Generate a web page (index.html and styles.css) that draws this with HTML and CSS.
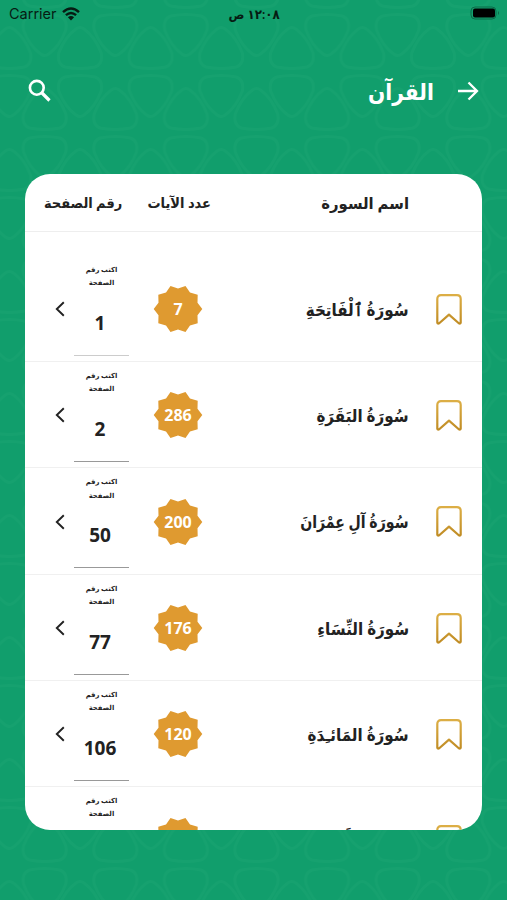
FILE: index.html
```
<!DOCTYPE html>
<html lang="ar" dir="rtl">
<head>
    <meta charset="UTF-8">
    <meta name="viewport" content="width=device-width, initial-scale=1.0">
    <title>القرآن</title>
    <link rel="stylesheet" href="styles.css">
</head>
<body>
    <!-- Background pattern and shared icons -->
    <svg class="pattern" width="507" height="900" aria-hidden="true">
        <defs>
            <pattern id="lattice" x="80" y="11" width="70.6" height="122" viewBox="0 0 70 122" preserveAspectRatio="none" patternUnits="userSpaceOnUse">
                <g fill="none" stroke="#35b582" stroke-width="3">
                    <path id="down" d="M20 5Q35 2 50 5Q58 8 56 19Q50 35 39 43Q35 46 31 43Q20 35 14 19Q12 8 20 5Z"/>
                    <path id="up" d="M-15 56Q0 59 15 56Q23 53 21 42Q15 26 4 18Q0 15 -4 18Q-15 26 -21 42Q-23 53 -15 56Z"/>
                    <use href="#up" x="70"/>
                    <use href="#down" x="-35" y="61"/>
                    <use href="#down" x="35" y="61"/>
                    <use href="#up" x="35" y="61"/>
                </g>
            </pattern>
            <linearGradient id="gold" x1="0" y1="0" x2="0" y2="1">
                <stop offset="0" stop-color="#dcae45"/>
                <stop offset="1" stop-color="#c08c24"/>
            </linearGradient>
            <symbol id="bookmark" viewBox="0 0 26 31">
                <path d="M5 1.2H21Q24.7 1.2 24.7 5V28.6Q24.4 30.2 22.8 29.3L13 20.6L3.2 29.3Q1.6 30.2 1.3 28.6V5Q1.3 1.2 5 1.2Z" fill="none" stroke="url(#gold)" stroke-width="2.2" stroke-linejoin="round"/>
            </symbol>
            <symbol id="star" viewBox="-25 -25 50 50">
                <path d="M24.3 0L19.5 6.3L19.7 14.3L12 16.6L7.5 23.1L0 20.5L-7.5 23.1L-12 16.6L-19.7 14.3L-19.5 6.3L-24.3 0L-19.5 -6.3L-19.7 -14.3L-12 -16.6L-7.5 -23.1L0 -20.5L7.5 -23.1L12 -16.6L19.7 -14.3L19.5 -6.3Z" fill="#df9a30"/>
            </symbol>
            <symbol id="chevron" viewBox="0 0 10 16">
                <path d="M8.8 1.2L1.8 8L8.8 14.8" fill="none" stroke="#222" stroke-width="1.9"/>
            </symbol>
        </defs>
        <rect width="507" height="900" fill="url(#lattice)"/>
    </svg>

    <div class="status-bar" dir="ltr">
        <div class="carrier">
            <span>Carrier</span>
            <svg width="18" height="14" viewBox="0 0 18 14">
                <path d="M1 5.2Q9 -2.2 17 5.2M3.9 8.2Q9 3.6 14.1 8.2" fill="none" stroke="#061c13" stroke-width="2.4"/>
                <path d="M5.9 10.2Q9 7.6 12.1 10.2L9 13.6Z" fill="#061c13"/>
            </svg>
        </div>
        <span class="time" dir="rtl">١٢:٠٨ ص</span>
        <svg class="battery" width="30" height="15" viewBox="0 0 30 15">
            <rect x="1" y="1" width="25" height="12" rx="4" fill="none" stroke="#0b6b49"/>
            <rect x="3" y="2.5" width="22" height="9" rx="2" fill="#000"/>
            <path d="M28 5Q30 7 28 9Z" fill="#0b6b49"/>
        </svg>
    </div>

    <header class="top-bar">
        <svg width="22" height="20" viewBox="0 0 22 20">
            <path d="M1 10H19M11.5 1.5L20 10L11.5 18.5" fill="none" stroke="#fff" stroke-width="2.3"/>
        </svg>
        <h1>القرآن</h1>
        <svg class="search" width="23" height="23" viewBox="0 0 23 23">
            <circle cx="8.8" cy="8.8" r="6.9" fill="none" stroke="#fff" stroke-width="2.6"/>
            <path d="M14 14L21.5 21.5" stroke="#fff" stroke-width="3.2"/>
        </svg>
    </header>

    <main class="card">
        <div class="card-head">
            <span class="head-name">اسم السورة</span>
            <span class="head-count">عدد الآيات</span>
            <span class="head-page">رقم الصفحة</span>
        </div>

        <div class="row">
            <svg class="bookmark"><use href="#bookmark"/></svg>
            <span class="name"><b>سُورَةُ ٱلْفَاتِحَةِ</b></span>
            <div class="badge"><svg><use href="#star"/></svg><span>7</span></div>
            <div class="page light"><small>اكتب رقم<br>الصفحة</small><strong>1</strong></div>
            <svg class="chevron"><use href="#chevron"/></svg>
        </div>
        <div class="row">
            <svg class="bookmark"><use href="#bookmark"/></svg>
            <span class="name"><b>سُورَةُ البَقَرَةِ</b></span>
            <div class="badge"><svg><use href="#star"/></svg><span>286</span></div>
            <div class="page"><small>اكتب رقم<br>الصفحة</small><strong>2</strong></div>
            <svg class="chevron"><use href="#chevron"/></svg>
        </div>
        <div class="row">
            <svg class="bookmark"><use href="#bookmark"/></svg>
            <span class="name long"><b>سُورَةُ آلِ عِمْرَانَ</b></span>
            <div class="badge"><svg><use href="#star"/></svg><span>200</span></div>
            <div class="page"><small>اكتب رقم<br>الصفحة</small><strong>50</strong></div>
            <svg class="chevron"><use href="#chevron"/></svg>
        </div>
        <div class="row">
            <svg class="bookmark"><use href="#bookmark"/></svg>
            <span class="name"><b>سُورَةُ النِّسَاءِ</b></span>
            <div class="badge"><svg><use href="#star"/></svg><span>176</span></div>
            <div class="page"><small>اكتب رقم<br>الصفحة</small><strong>77</strong></div>
            <svg class="chevron"><use href="#chevron"/></svg>
        </div>
        <div class="row">
            <svg class="bookmark"><use href="#bookmark"/></svg>
            <span class="name"><b>سُورَةُ المَائـِدَةِ</b></span>
            <div class="badge"><svg><use href="#star"/></svg><span>120</span></div>
            <div class="page"><small>اكتب رقم<br>الصفحة</small><strong>106</strong></div>
            <svg class="chevron"><use href="#chevron"/></svg>
        </div>
        <div class="row">
            <svg class="bookmark"><use href="#bookmark"/></svg>
            <span class="name"><b>سُورَةُ الأَنْعَامِ</b></span>
            <div class="badge"><svg><use href="#star"/></svg></div>
            <div class="page"><small>اكتب رقم<br>الصفحة</small></div>
        </div>
    </main>
</body>
</html>
```
FILE: styles.css
```
* {
    box-sizing: border-box;
}

body {
    margin: 0;
    height: 900px;
    overflow: hidden;
    background-color: #119e6c;
    color: #222;
    font-family: "Noto Sans", "DejaVu Sans", sans-serif;
}

svg {
    display: block;
    flex: none;
}

/* pattern sits behind everything */
.pattern {
    position: absolute;
    top: 0;
    left: 0;
    z-index: -1;
    opacity: 0.15;
}

.status-bar {
    display: grid;
    grid-template-columns: 1fr auto 1fr;
    align-items: center;
    height: 27px;
    padding: 0 7px 0 9px;
    color: #061c13;
}

.carrier {
    display: flex;
    align-items: center;
    gap: 5px;
    font-family: Inter, sans-serif;
    font-size: 14.5px;
}

.time {
    font-size: 13px;
    font-weight: 600;
    transform: scaleX(0.91);
}

.battery {
    justify-self: end;
}

.top-bar {
    display: flex;
    align-items: center;
    height: 127px;
    padding: 0 28px;
}

.top-bar h1 {
    margin: 0 23px 0 0;
    color: #fff;
    font-size: 23px;
    line-height: 40px;
    transform: scaleX(0.88);
    transform-origin: right;
}

.search {
    margin-right: auto;
}

.card {
    height: 656px;
    margin: 20.4px 25px 0;
    overflow: hidden;
    background-color: #fff;
    border-radius: 25px;
}

.card-head {
    display: flex;
    align-items: center;
    height: 58px;
    margin-bottom: 23.4px;
    padding: 0 73px 0 12px;
    border-bottom: 1px solid #eee;
    font-size: 14px;
    font-weight: bold;
    white-space: nowrap;
}

.card-head span {
    flex: none;
    transform: scaleX(0.93);
    transform-origin: right;
}

.head-name {
    width: 198px;
    font-size: 16px;
}

.head-count {
    width: 89px;
}

.row {
    display: grid;
    grid-template-columns: 26px 1fr 50px 79px 19px;
    align-items: center;
    height: 106.3px;
    padding: 1.5px 20px 0 30px;
    border-bottom: 1.5px solid #f0f0f0;
}

.bookmark {
    width: 26px;
    height: 31px;
}

.name {
    padding-right: 27px;
    font-size: 17px;
    white-space: nowrap;
}

.name b {
    display: inline-block;
    transform: scaleX(0.89);
    transform-origin: right;
}

.name.long b {
    transform: scaleX(0.83);
}

.badge {
    display: grid;
    place-items: center;
    color: #fff;
    font-size: 16px;
    font-weight: bold;
}

.badge svg,
.badge span {
    grid-area: 1 / 1;
}

.badge svg {
    width: 50px;
    height: 50px;
}

.page {
    display: flex;
    flex-direction: column;
    align-items: center;
    width: 55px;
    height: 93px;
    margin-right: 24px;
    border-bottom: 1.5px solid #999;
}

.page.light {
    border-bottom-color: #ccc;
}

.page small {
    font-size: 6.8px;
    font-weight: bold;
    line-height: 13.3px;
    text-align: center;
    white-space: nowrap;
}

.page strong {
    margin: 19.5px 3px 0 0;
    font-size: 19px;
    line-height: 28px;
}

.chevron {
    width: 10px;
    height: 16px;
    justify-self: end;
}
```
